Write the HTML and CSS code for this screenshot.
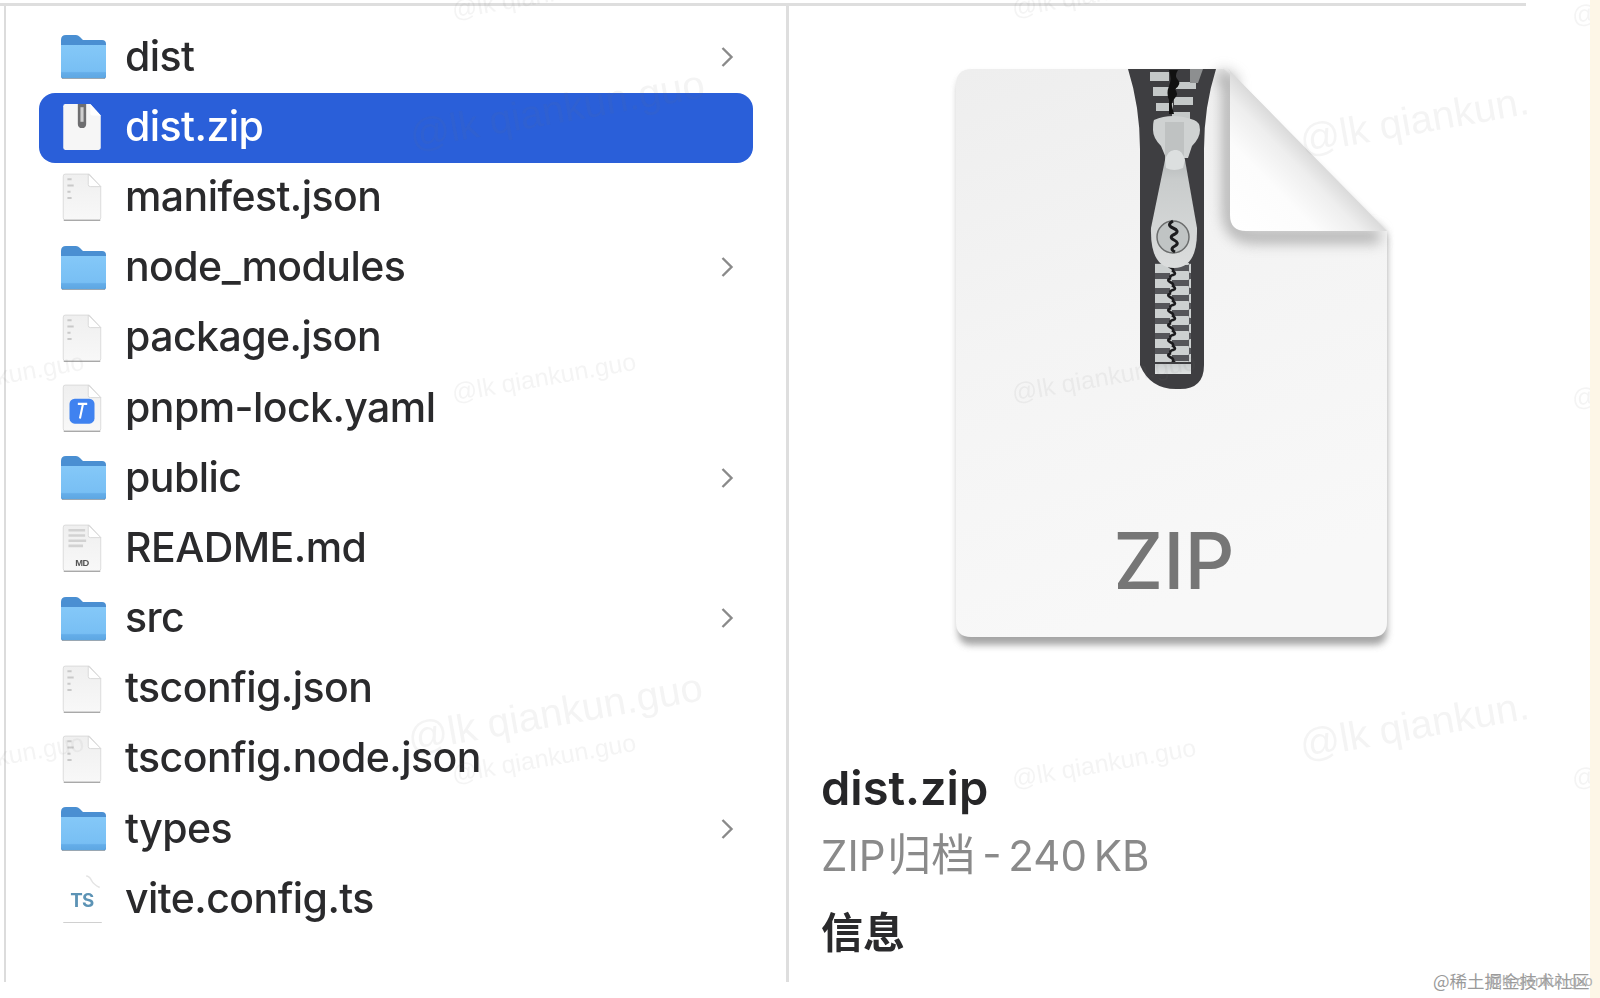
FILE: index.html
```html
<!DOCTYPE html>
<html lang="zh-CN">
<head>
<meta charset="utf-8">
<title>dist.zip</title>
<link rel="stylesheet" href="styles.css">
</head>
<body>
<svg class="defs" width="0" height="0" aria-hidden="true">
  <defs>
    <linearGradient id="folderFront" x1="0" y1="0" x2="0" y2="1">
      <stop offset="0" stop-color="#84c8f8"/><stop offset=".8" stop-color="#78bff4"/><stop offset=".84" stop-color="#64ade9"/><stop offset="1" stop-color="#5ea7e2"/>
    </linearGradient>
    <linearGradient id="pageFill" x1="0" y1="0" x2="0" y2="1">
      <stop offset="0" stop-color="#efefef"/><stop offset="1" stop-color="#f8f8f8"/>
    </linearGradient>
    <symbol id="folder" viewBox="0 0 48 46">
      <path d="M2 6q0-5 5-5h10q2 0 4 2l3 3h19q4 0 4 4v32q0 3-3 3H5q-3 0-3-3z" fill="#4a8fd2"/>
      <path d="M2 11h45v30q0 3-3 3H5q-3 0-3-3z" fill="url(#folderFront)"/>
      <path d="M3 44.500h43" stroke="#9aa7b2" stroke-width="1"/>
    </symbol>
    <symbol id="page" viewBox="0 0 42 48">
      <path d="M3 4q0-2 2-2h23l11 12v30q0 2-2 2H5q-2 0-2-2z" fill="url(#pageFill)" stroke="#d6d6d6" stroke-width=".8"/>
      <path d="M3.500 46.500h35" stroke="#a9a9a9" stroke-width="1.200"/>
      <path d="M27 2v10q0 2 2 2h10z" fill="#fff" stroke="#d4d4d4" stroke-width=".8"/>
    </symbol>
    <symbol id="json" viewBox="0 0 42 48">
      <use href="#page" width="42" height="48"/>
      <path d="M7 7h4M7 13h6M7 19h3M7 25h4" stroke="#c9c9c9" stroke-width="2"/>
    </symbol>
    <symbol id="zipmini" viewBox="0 0 42 48">
      <path d="M3 4q0-2 2-2h24l10 11v31q0 2-2 2H5q-2 0-2-2z" fill="#f6f6f6"/>
      <path d="M29 2v9q0 2 2 2h8z" fill="#fff"/>
      <path d="M17 2h8v19q0 4-4 4t-4-4z" fill="#6e6e70"/>
      <rect x="19.500" y="5" width="3" height="14" fill="#cfcfcf"/>
    </symbol>
    <symbol id="yaml" viewBox="0 0 42 48">
      <use href="#page" width="42" height="48"/>
      <rect x="9" y="15" width="24" height="24" rx="5" fill="#3f82f0"/>
      <path d="M17 20h9M22 20l-3 14" stroke="#fff" stroke-width="2" fill="none"/>
    </symbol>
    <symbol id="md" viewBox="0 0 42 48">
      <use href="#page" width="42" height="48"/>
      <path d="M8 7h16M8 12h16M8 17h17M8 22h14" stroke="#d2d2d2" stroke-width="2.500"/>
      <text x="21" y="41" class="md-label">MD</text>
    </symbol>
    <symbol id="ts" viewBox="0 0 42 48">
      <path d="M3 2h24l12 12v32H3z" fill="#fff"/>
      <path d="M25 2q3 0 5 4t8 7" fill="none" stroke="#e4e4e4" stroke-width="1.500"/>
      <path d="M3 46.500h37" stroke="#d0d0d0" stroke-width="1"/>
      <text x="21" y="32" class="ts-label">TS</text>
    </symbol>
    <symbol id="chev" viewBox="0 0 14 22">
      <path d="M2.500 2l9 9-9 9" fill="none" stroke="#8a8a8a" stroke-width="2.400"/>
    </symbol>
  </defs>
</svg>

<div class="page">
  <main class="finder">
    <div class="top-rule"></div>
    <div class="columns">
      <ul class="list">
        <li class="row"><svg class="ico-folder"><use href="#folder"/></svg><span class="name">dist</span><svg class="chev"><use href="#chev"/></svg></li>
        <li class="row selected"><svg class="ico-file"><use href="#zipmini"/></svg><span class="name">dist.zip</span></li>
        <li class="row"><svg class="ico-file"><use href="#json"/></svg><span class="name">manifest.json</span></li>
        <li class="row"><svg class="ico-folder"><use href="#folder"/></svg><span class="name">node_modules</span><svg class="chev"><use href="#chev"/></svg></li>
        <li class="row"><svg class="ico-file"><use href="#json"/></svg><span class="name">package.json</span></li>
        <li class="row"><svg class="ico-file"><use href="#yaml"/></svg><span class="name">pnpm-lock.yaml</span></li>
        <li class="row"><svg class="ico-folder"><use href="#folder"/></svg><span class="name">public</span><svg class="chev"><use href="#chev"/></svg></li>
        <li class="row"><svg class="ico-file"><use href="#md"/></svg><span class="name">README.md</span></li>
        <li class="row"><svg class="ico-folder"><use href="#folder"/></svg><span class="name">src</span><svg class="chev"><use href="#chev"/></svg></li>
        <li class="row"><svg class="ico-file"><use href="#json"/></svg><span class="name">tsconfig.json</span></li>
        <li class="row"><svg class="ico-file"><use href="#json"/></svg><span class="name">tsconfig.node.json</span></li>
        <li class="row"><svg class="ico-folder"><use href="#folder"/></svg><span class="name">types</span><svg class="chev"><use href="#chev"/></svg></li>
        <li class="row"><svg class="ico-file"><use href="#ts"/></svg><span class="name">vite.config.ts</span></li>
      </ul>
      <section class="preview">
        <svg class="bigdoc" viewBox="930 55 480 610" width="480" height="610" role="img" aria-label="ZIP">
          <defs>
            <linearGradient id="docFill" x1="0" y1="0" x2=".25" y2="1">
              <stop offset="0" stop-color="#eeeeee"/><stop offset=".5" stop-color="#f4f4f4"/><stop offset="1" stop-color="#f8f8f8"/>
            </linearGradient>
            <linearGradient id="foldFill" x1="0" y1="1" x2="1" y2="0">
              <stop offset="0" stop-color="#ffffff"/><stop offset=".28" stop-color="#fcfcfc"/><stop offset=".42" stop-color="#eeeeee"/><stop offset=".5" stop-color="#dadada"/>
            </linearGradient>
            <linearGradient id="metal" x1="0" y1="0" x2="0" y2="1">
              <stop offset="0" stop-color="#c9cdce"/><stop offset="1" stop-color="#dfe2e2"/>
            </linearGradient>
            <linearGradient id="pull" x1="0" y1="0" x2="0" y2="1">
              <stop offset="0" stop-color="#aeb2b3"/><stop offset=".25" stop-color="#c9cccc"/><stop offset="1" stop-color="#dbdddd"/>
            </linearGradient>
            <pattern id="teeth" patternUnits="userSpaceOnUse" x="1153" y="263" width="36" height="15">
              <rect width="36" height="15" fill="#55565a"/>
              <rect x="0" y="1" width="19" height="9" rx="1" fill="#ccd0d0"/>
              <rect x="17" y="8" width="19" height="9" rx="1" fill="#ccd0d0"/>
              <rect x="17" y="-7" width="19" height="9" rx="1" fill="#ccd0d0"/>
              <path d="M18 0q-5 2 -1 4t3 4q4 3 0 4t-2 3" fill="none" stroke="#1c1c1e" stroke-width="2.600"/>
            </pattern>
            <filter id="soft" x="-20%" y="-20%" width="140%" height="140%"><feGaussianBlur stdDeviation="7"/></filter>
            <filter id="softer" x="-10%" y="-10%" width="120%" height="130%"><feGaussianBlur stdDeviation="3.500"/></filter>
          </defs>
          <path d="M956 625V85q0-16 16-16h250l163 160v396q0 14-14 14H970q-14 0-14-14z" transform="translate(0 6)" fill="#8f8f8f" filter="url(#softer)" opacity=".8"/>
          <path d="M954 622V85q0-16 16-16h252l163 162v391q0 15-15 15H969q-15 0-15-15z" fill="url(#docFill)"/>
          <path d="M1216 75l12 6v131q0 24 24 24h126" fill="none" stroke="#777" stroke-width="14" filter="url(#soft)" opacity=".55"/>
          <path d="M1226 69l159 162h-3H1244q-16 0-16-16V70z" fill="url(#foldFill)"/>
          <g class="zipper">
            <path d="M1128 69h88q-12 38-12 80v216q0 24-24 24h-4q-26 0-36-24V149q0-42-12-80z" fill="#3e3e41"/>
            <path d="M1150 72h19v9h-19zM1153 87h19v9h-19zM1156 103h17v8h-17z" fill="#c4c8c8"/>
            <path d="M1176 82h20v7h-20zM1174 97h19v8h-19zM1172 112h18v7h-18z" fill="#c4c8c8"/>
            <path d="M1190 69h13l-5 14h-8z" fill="#8d8f90"/>
            <path d="M1169 70h9q-4 6 0 10t-3 9q4 5 0 9t-3 8l2 8h-5v-14q-3-7 0-14t0-16z" fill="#111"/>
            <rect x="1155" y="263" width="36" height="99" fill="url(#teeth)"/>
            <path d="M1155 364h36v10h-36z" fill="url(#metal)"/>
            <path d="M1154 120q18-8 40 0q6 2 6 10 0 8-8 16l-4 12h-22l-5-12q-8-8-8-16t1-10z" fill="#cfd2d2"/>
            <path d="M1165 122h19v38h-19z" fill="#bfc2c2"/>
            <path d="M1165 160q3-10 8-10h4q5 0 8 10l12 68q1 40-23 40-24 0-23-40z" fill="url(#pull)"/>
            <path d="M1165 160q3-10 9-10h3q5 0 8 10l-2 8q-9 4-17 0z" fill="#dcdfdf"/>
            <circle cx="1173" cy="237" r="16" fill="#c0c4c4" stroke="#6b6d6d" stroke-width="1.500"/>
            <path d="M1173 221q-7 4 0 7t2 6q-7 3-1 6t1 6q-6 3 0 6" fill="none" stroke="#1c1c1e" stroke-width="3"/>
          </g>
          <text x="1172" y="589" class="zip-label">ZIP</text>
        </svg>
        <h1 class="fname">dist.zip</h1>
        <p class="kind">ZIP <span class="kind-cjk">归档</span> - 240 KB</p>
        <h2 class="info">信息</h2>
      </section>
    </div>
    <span class="wm big w1">@lk qiankun.guo</span>
    <span class="wm big w2">@lk qiankun.guo</span>
    <span class="wm big w3">@lk qiankun.</span>
    <span class="wm big w4">@lk qiankun.</span>
    <span class="wm small w5">@lk qiankun.guo</span>
    <span class="wm small w6">@lk qiankun.guo</span>
    <span class="wm small w7">@lk qiankun.guo</span>
    <span class="wm small w8">@lk qiankun.guo</span>
    <span class="wm small w9">@lk qiankun.guo</span>
    <span class="wm small w10">@lk qiankun.guo</span>
    <span class="wm small w11">@lk qiankun.guo</span>
    <span class="wm small w12">@lk qiankun.guo</span>
    <span class="wm small w13">@lk</span>
    <span class="wm small w14">@lk</span>
    <span class="wm small w15">@lk</span>
  </main>
  <div class="strip"></div>
  <div class="credit"><span class="credit-a">@稀土掘金技术社区</span><span class="credit-b">@lk qiankun.guo</span></div>
</div>
</body>
</html>
```

FILE: styles.css
```css
* { box-sizing: border-box; }
html, body { margin: 0; padding: 0; height: 100%; background: #fff; overflow: hidden; }
body { font-family: Inter, "Noto Sans CJK SC", sans-serif; color: #2a2a2c; }
.defs { position: absolute; }

.page { position: relative; display: flex; width: 1600px; height: 998px; overflow: hidden; }
.finder { position: relative; flex: 0 0 1590px; overflow: hidden; filter: blur(.5px); }
.strip { flex: 0 0 10px; background: #fdf6e7; }

.top-rule { width: 1526px; height: 3px; margin-top: 3px; background: #dedede; }
.columns { display: flex; height: 976px; }

.list { flex: 0 0 782px; margin: 0 0 0 4px; padding: 17px 33px 0 33px; list-style: none; border-left: 2px solid #dcdcdc; }
.row { display: flex; align-items: center; height: 70.2px; padding: 0 19px 0 20px; border-radius: 16px; font-size: 41px; font-weight: 450; letter-spacing: -.55px; }
.row.selected { background: #2a5fd9; color: #fff; }
.name { flex: 1; line-height: 1; margin-top: -4px; }
.ico-folder { width: 48px; height: 46px; margin: -2px 18px 0 0; flex: none; }
.ico-file { width: 44px; height: 50px; margin: -2px 21px 0 1px; flex: none; }
.chev { width: 14px; height: 22px; flex: none; margin-top: -3px; }

.preview { flex: 1; border-left: 3px solid #dedede; min-width: 0; }
.bigdoc { display: block; margin: 49px 0 0 143px; }
.zipper { transform: translateX(-2px); }
.zip-label { font-family: Inter, sans-serif; font-size: 78px; font-weight: 500; fill: #767676; text-anchor: middle; }
.md-label { font-family: "Liberation Sans", sans-serif; font-size: 9px; font-weight: 700; fill: #555; text-anchor: middle; }
.ts-label { font-family: Inter, sans-serif; font-size: 18px; font-weight: 700; fill: #5c93b5; text-anchor: middle; }

.fname { margin: 95px 0 0 32px; font-size: 47px; line-height: 56px; font-weight: 600; color: #262628; }
.kind { margin: 13px 0 0 32px; font-size: 42px; line-height: 52px; word-spacing: -5px; color: #8a8a8a; }
.kind-cjk { font-size: 44px; margin-left: -5px; }
.info { margin: 25px 0 0 32px; font-size: 42px; line-height: 52px; font-weight: 700; color: #2a2a2c; }

.wm { position: absolute; white-space: nowrap; transform: rotate(-10deg); transform-origin: left center; color: rgba(120, 120, 120, .08); font-family: "Liberation Sans", sans-serif; }
.wm.big { font-size: 40px; }
.wm.small { font-size: 25px; }
.w1 { left: 410px; top: 113px; }
.w2 { left: 408px; top: 716px; }
.w3 { left: 1300px; top: 118px; }
.w4 { left: 1300px; top: 723px; }
.w5 { left: 452px; top: -4px; }
.w6 { left: 1012px; top: -6px; }
.w7 { left: 452px; top: 379px; }
.w8 { left: 1012px; top: 379px; }
.w9 { left: 452px; top: 760px; }
.w10 { left: 1012px; top: 765px; }
.w11 { left: -100px; top: 379px; }
.w12 { left: -100px; top: 760px; }
.w13 { left: 1572px; top: 2px; }
.w14 { left: 1572px; top: 385px; }
.w15 { left: 1572px; top: 765px; }

.credit { position: absolute; left: 1433px; top: 968px; width: 157px; height: 26px; color: #9a9a9a; line-height: 26px; white-space: nowrap; }
.credit-a { position: absolute; left: 0; top: 0; font-family: "Noto Sans CJK SC", sans-serif; font-size: 17.500px; }
.credit-b { position: absolute; left: 55px; top: 0; font-family: "Liberation Sans", sans-serif; color: #b0b0b0; font-size: 14px; }
```
